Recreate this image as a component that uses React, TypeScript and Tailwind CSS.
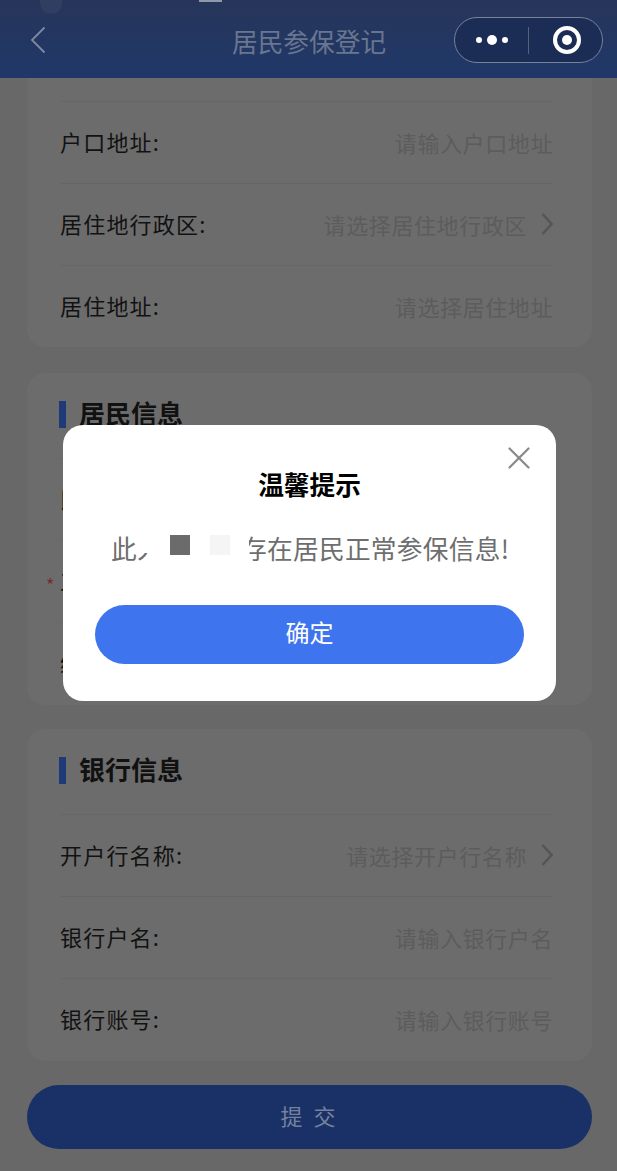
import { X } from 'lucide-react';

const cjk = "font-['Noto_Sans_CJK_SC','Noto_Sans',sans-serif]";

function Chevron() {
  return (
    <svg width="12" height="24" viewBox="0 0 12 24" fill="none" className="ml-[14px] shrink-0">
      <path d="M1.5 2l9 10-9 10" stroke="#555" strokeWidth="2.4" />
    </svg>
  );
}

function Row({ label, hint, arrow, star }: { label: string; hint?: string; arrow?: boolean; star?: boolean }) {
  return (
    <div className="relative flex h-[82px] items-center justify-between border-t border-[#666] pb-[3px]">
      {star && <span className="absolute left-[-14px] top-[30px] text-[18px] text-[#7c2a2a]">*</span>}
      <span className="text-[22px] tracking-[1.2px] text-[#121212]">{label}</span>
      {hint && (
        <span className="-mr-px mt-[2px] flex items-center text-[22px] tracking-[0.6px] text-[#5c5c5c]">
          {hint}
          {arrow && <Chevron />}
        </span>
      )}
    </div>
  );
}

function Section({ title, children }: { title: string; children: React.ReactNode }) {
  return (
    <section className="ml-[27px] mr-[25px] h-[332px] rounded-[18px] bg-[#6c6c6c] pl-[33px] pr-[40px]">
      <div className="-ml-px flex h-[85px] items-center pb-[3px]">
        <span className="mr-[13px] h-[27px] w-[7px] bg-[#1f3a78]" />
        <h2 className="-mt-[2px] text-[26px] font-bold leading-none text-[#111]">{title}</h2>
      </div>
      {children}
    </section>
  );
}

function Capsule() {
  return (
    <div className="flex h-[46px] w-[149px] items-center rounded-full border border-[#76819a] bg-[#1c2d55]">
      <div className="flex w-[73px] items-center justify-center gap-[5px]">
        <span className="h-[6px] w-[6px] rounded-full bg-white" />
        <span className="h-[10px] w-[10px] rounded-full bg-white" />
        <span className="h-[6px] w-[6px] rounded-full bg-white" />
      </div>
      <span className="h-[27px] w-px bg-[#56617c]" />
      <div className="flex flex-1 items-center justify-center pl-[2px]">
        <span className="flex h-[28px] w-[28px] items-center justify-center rounded-full border-[4px] border-white">
          <span className="h-[10px] w-[10px] rounded-full bg-white" />
        </span>
      </div>
    </div>
  );
}

export default function App() {
  return (
    <div className={`relative flex h-[1171px] w-[617px] flex-col overflow-hidden bg-[#686868] ${cjk}`}>
      <header className="relative flex h-[78px] shrink-0 items-center justify-between bg-gradient-to-b from-[#27355a] to-[#1f3869] pl-[30px] pr-[14px] pt-[2px]">
        <span className="absolute left-[199px] top-0 h-[2px] w-[23px] bg-[#8f97aa]" />
        <span className="absolute left-[40px] top-0 h-[14px] w-[22px] rounded-b-full bg-[#303e62]" />
        <svg width="16" height="28" viewBox="0 0 16 28" fill="none">
          <path d="M14.5 1.5L2 14l12.5 12.5" stroke="#7f8aa1" strokeWidth="1.8" />
        </svg>
        <h1 className="absolute left-[232px] top-[19px] text-[25.7px] leading-[44px] text-[#69768f]">居民参保登记</h1>
        <Capsule />
      </header>

      <section className="ml-[27px] mr-[25px] h-[269px] shrink-0 rounded-b-[18px] bg-[#6c6c6c] pl-[33px] pr-[40px] pt-[23px]">
        <Row label="户口地址:" hint="请输入户口地址" />
        <Row label="居住地行政区:" hint="请选择居住地行政区" arrow />
        <Row label="居住地址:" hint="请选择居住地址" />
      </section>

      <div className="mt-[26px] flex flex-col gap-[24px]">
        <Section title="居民信息">
          <Row label="民族:" />
          <Row label="工作类别:" star />
          <Row label="缴费档次:" />
        </Section>
        <Section title="银行信息">
          <Row label="开户行名称:" hint="请选择开户行名称" arrow />
          <Row label="银行户名:" hint="请输入银行户名" />
          <Row label="银行账号:" hint="请输入银行账号" />
        </Section>
      </div>

      <button className="ml-[27px] mr-[25px] mt-[24px] h-[64px] shrink-0 rounded-full bg-[#1a3167] pb-[3px] text-[22px] tracking-[3px] text-[#76829c]">
        提 交
      </button>

      {/* dialog */}
      <div className="absolute left-[63px] top-[425px] flex h-[276px] w-[493px] flex-col items-center rounded-[20px] bg-white px-[32px] pt-[38px]">
        <X className="absolute right-[18px] top-[14px] text-[#8a8a8a]" size={38} strokeWidth={1.4} />
        <h3 className="text-[25.7px] font-bold leading-[42px] text-black">温馨提示</h3>
        <div className="relative mt-[22px] w-full pl-[16px] text-[25.7px] leading-[42px] tracking-[0.3px] whitespace-nowrap text-[#6e6e6e]">
          此人员已经存在居民正常参保信息!
          <span className="absolute left-[42px] top-[0px] h-[26px] w-[112px] bg-white" />
          <span className="absolute left-[53px] top-[26px] h-[16px] w-[101px] bg-white" />
          <span className="absolute left-[75px] top-[8px] h-[20px] w-[20px] bg-[#6b6b6b]" />
          <span className="absolute left-[115px] top-[8px] h-[20px] w-[20px] bg-[#f5f5f5]" />
        </div>
        <button className="mt-[36px] h-[59px] w-[429px] shrink-0 rounded-full bg-[#3f74ef] pb-[5px] text-[24px] text-white">确定</button>
      </div>
    </div>
  );
}
